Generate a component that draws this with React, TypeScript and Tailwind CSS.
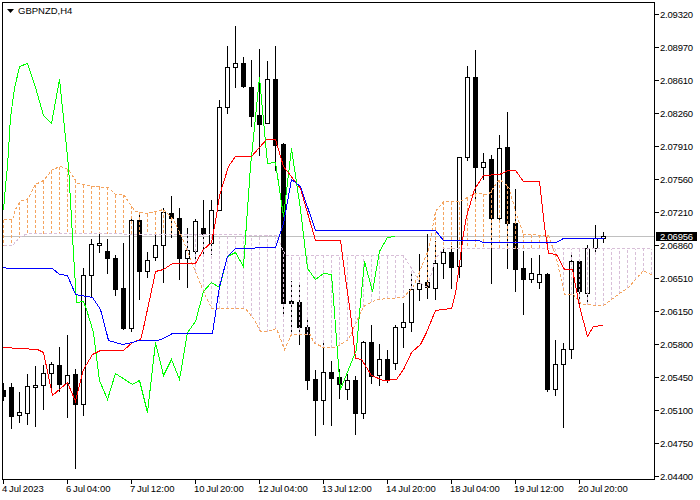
// GBPNZD H4 chart with Ichimoku, all coordinates are page pixels
type Candle = [number, number, number, number, 0 | 1];

// high, body top, body bottom, low, 1 = bear
const candles: Candle[] = [
  [383, 390, 396, 400, 1], [383, 387, 416, 428, 1], [392, 412, 415, 422, 0], [374, 386, 413, 424, 0],
  [366, 385, 387, 426, 0], [365, 373, 385, 409, 0], [362, 364, 373, 391, 0], [347, 365, 384, 391, 1],
  [335, 375, 383, 417, 0], [369, 374, 404, 468, 1], [268, 275, 404, 415, 0], [239, 244, 275, 297, 0],
  [234, 243, 245, 252, 0], [239, 251, 258, 273, 1], [255, 258, 289, 295, 1], [243, 288, 328, 329, 1],
  [218, 220, 328, 331, 0], [213, 220, 271, 299, 1], [252, 260, 271, 277, 0], [233, 245, 257, 260, 0],
  [208, 212, 245, 282, 0], [196, 213, 218, 237, 1], [208, 218, 258, 279, 1], [228, 250, 258, 287, 0],
  [219, 221, 251, 266, 0], [200, 228, 234, 253, 1], [200, 210, 243, 254, 0], [100, 107, 210, 210, 0],
  [46, 67, 107, 113, 0], [26, 63, 67, 87, 0], [57, 63, 86, 87, 1], [60, 87, 116, 126, 1],
  [49, 115, 124, 155, 1], [61, 79, 123, 123, 0], [46, 79, 145, 170, 1], [143, 144, 303, 313, 1],
  [281, 301, 303, 331, 1], [283, 302, 327, 344, 1], [318, 327, 380, 389, 1], [370, 379, 400, 435, 1],
  [342, 372, 400, 424, 0], [361, 372, 378, 425, 1], [369, 377, 384, 398, 1], [374, 380, 389, 399, 0],
  [376, 380, 413, 434, 1], [341, 342, 413, 418, 0], [325, 342, 376, 383, 1], [344, 359, 375, 385, 0],
  [350, 359, 379, 382, 1], [325, 327, 363, 369, 0], [303, 322, 327, 347, 0], [271, 289, 322, 331, 0],
  [254, 283, 289, 300, 0], [234, 282, 287, 298, 1], [241, 263, 288, 299, 0], [249, 252, 263, 278, 0],
  [246, 252, 267, 288, 1], [157, 157, 266, 277, 0], [66, 77, 157, 160, 0], [50, 77, 167, 199, 1],
  [153, 162, 167, 179, 0], [155, 159, 218, 283, 1], [135, 148, 218, 219, 0], [112, 147, 223, 268, 1],
  [189, 223, 269, 291, 1], [251, 268, 279, 314, 1], [258, 273, 279, 282, 0], [255, 274, 282, 288, 0],
  [273, 274, 389, 391, 1], [340, 364, 389, 395, 0], [343, 349, 364, 427, 0], [254, 261, 349, 358, 0],
  [259, 261, 291, 304, 1], [245, 248, 293, 304, 0], [225, 238, 248, 254, 0], [232, 236, 238, 242, 0],
];

const green = "3,210 5,186 7,166 10,117 14,88 19,66 27,63 35,87 43,115 51,123 59,79 68,166 73,253 76,302 83,301 86,309 93,332 99,380 107,399 115,373 132,384 139,380 147,412 155,342 163,375 171,359 179,379 187,332 195,321 203,291 211,282 219,287 227,256 235,252 243,266 250,166 259,77 267,163 275,162 283,216 291,148 300,209 307,268 315,279 323,273 331,274 333,299 338,365 340,389 356,349 359,313 364,261 372,291 379,251 387,237 395,236";
const red = "3,347 37,349 43,352 52,395 67,382 75,401 83,369 92,354 100,350 123,350 132,342 140,339 142,332 153,281 155,271 163,269 172,263 195,263 203,249 211,242 215,221 219,195 228,166 235,156 251,156 259,147 266,139 275,139 283,166 300,188 315,240 340,240 345,278 350,313 355,358 361,359 371,375 383,380 396,379 403,369 411,352 420,344 426,332 435,310 451,308 455,293 463,233 466,216 474,189 483,175 499,174 508,170 515,170 523,181 539,181 544,226 548,253 556,254 564,269 572,269 579,306 587,336 593,326 603,325";
const blue = "3,267 8,268 52,268 59,274 67,275 75,294 92,297 100,309 106,332 108,340 122,344 132,342 138,340 157,340 163,338 172,333 212,333 219,286 227,256 235,248 275,247 283,223 291,179 300,186 315,230 435,230 443,240 478,240 483,242 556,242 563,238 603,238";
const spanA = "3,219 12,219 15,209 20,200 27,199 35,184 43,180 52,169 60,166 68,169 77,183 92,186 108,187 115,194 123,194 135,211 147,213 155,211 163,209 172,218 180,233 193,266 203,291 211,308 245,308 253,318 260,331 267,331 276,328 284,349 291,334 310,334 313,342 323,347 335,347 348,339 363,306 376,299 403,297 413,286 428,249 435,211 443,201 460,201 474,193 488,194 499,179 508,186 516,214 523,234 548,235 556,258 564,294 573,294 581,304 603,305 611,299 619,293 628,287 636,278 643,270 652,275";
const spanB = "3,245 12,245 20,236 28,233 210,234 276,235 285,255 403,255 413,271 419,282 427,287 435,258 443,248 651,248";

const prices = [
  "2.09320", "2.08970", "2.08610", "2.08260", "2.07910", "2.07560", "2.07210", "2.06860",
  "2.06510", "2.06150", "2.05800", "2.05450", "2.05100", "2.04750", "2.04400",
];

const times = [
  "4 Jul 2023", "6 Jul 04:00", "7 Jul 12:00", "10 Jul 20:00", "12 Jul 04:00",
  "13 Jul 12:00", "14 Jul 20:00", "18 Jul 04:00", "19 Jul 12:00", "20 Jul 20:00",
];

function parsePoints(points: string) {
  return points.split(" ").map((pair) => pair.split(",").map(Number));
}

function valueAt(line: number[][], x: number) {
  for (let i = 1; i < line.length; i++) {
    if (x <= line[i][0]) {
      const [x0, y0] = line[i - 1];
      const [x1, y1] = line[i];
      return y0 + ((y1 - y0) * (x - x0)) / (x1 - x0);
    }
  }
  return line[line.length - 1][1];
}

function Cloud() {
  const a = parsePoints(spanA);
  const b = parsePoints(spanB);
  const bars = [];

  for (let x = 3; x <= 651; x += 8) {
    const ya = valueAt(a, x);
    const yb = valueAt(b, x);
    bars.push(
      <line
        key={x}
        x1={x}
        x2={x}
        y1={ya}
        y2={yb}
        stroke={ya < yb ? "#f4a460" : "#d8bfd8"}
        strokeDasharray="3 2"
      />
    );
  }

  return <g>{bars}</g>;
}

function CandleBar({ candle, index }: { candle: Candle; index: number }) {
  const [high, top, bottom, low, bear] = candle;
  const x = 3 + index * 8;

  return (
    <g>
      <rect x={x} y={high} width={1} height={low - high + 1} fill="#000" />
      {bear ? (
        <rect x={x - 2} y={top} width={5} height={bottom - top + 1} fill="#000" />
      ) : (
        <rect x={x - 1.5} y={top + 0.5} width={4} height={bottom - top} fill="#fff" stroke="#000" />
      )}
    </g>
  );
}

export default function App() {
  return (
    <div className="flex h-[500px] w-[700px] flex-col overflow-hidden bg-white font-['Liberation_Sans',Arial,sans-serif] text-[9.5px] leading-[9px] text-black">
      <div className="flex h-[480px]">
        <div className="relative mt-[2px] ml-[2px] h-[478px] w-[653px] border border-black">
          <svg width={651} height={476} viewBox="3 3 651 476" shapeRendering="crispEdges" className="block">
            <rect x={3} y={236} width={651} height={1} fill="#c0c0c0" />
            {candles.map((candle, index) => (
              <CandleBar key={index} candle={candle} index={index} />
            ))}
            <g transform="translate(0.5 0.5)" fill="none">
              <Cloud />
              <polyline points={spanB} stroke="#d8bfd8" strokeDasharray="3 2" />
              <polyline points={spanA} stroke="#f4a460" strokeDasharray="3 2" />
              <polyline points={green} stroke="#00ff00" />
              <polyline points={red} stroke="#ff0000" />
              <polyline points={blue} stroke="#0000ff" />
            </g>
          </svg>

          {/* symbol caption */}
          <div className="absolute top-[3px] left-[4px] flex items-center gap-[4px]">
            <svg width={7} height={4} viewBox="0 0 7 4">
              <path d="M0 0H7L3.5 4Z" fill="#000" />
            </svg>
            <span>GBPNZD,H4</span>
          </div>
        </div>

        <div className="relative -mt-[2px] h-[495px] w-[45px] shrink-0">
          {prices.map((price) => (
            <div key={price} className="flex h-[33px] items-center">
              <span className="h-px w-[4px] bg-black" />
              <span className="ml-[1px] tracking-[-0.2px]">{price}</span>
            </div>
          ))}

          {/* current bid */}
          <div className="absolute top-[234px] left-[1px] flex h-[9px] w-[41px] items-center bg-black pl-[4px] tracking-[-0.2px] text-white">
            2.06956
          </div>
        </div>
      </div>

      <div className="ml-[3px] flex">
        {times.map((time) => (
          <div key={time} className="flex w-[64px] shrink-0 flex-col">
            <span className="h-[4px] w-px bg-black" />
            <span className="-ml-px whitespace-nowrap [word-spacing:-1px]">{time}</span>
          </div>
        ))}
      </div>
    </div>
  );
}
